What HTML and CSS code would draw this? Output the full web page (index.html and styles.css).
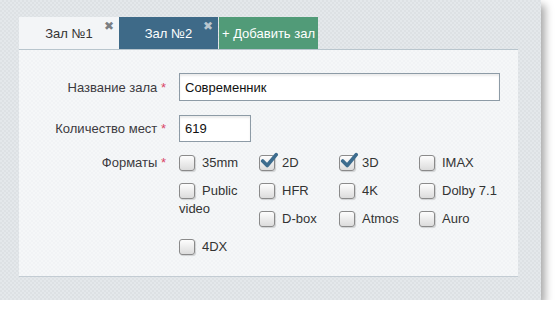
FILE: index.html
```html
<!DOCTYPE html>
<html lang="ru">
<head>
    <meta charset="UTF-8">
    <title>Залы</title>
    <link rel="stylesheet" href="styles.css">
</head>
<body>
    <div class="frame">
        <div class="tabs">
            <div class="tab tab-light">Зал №1<span class="tab-close">✖</span></div>
            <div class="tab tab-dark">Зал №2<span class="tab-close">✖</span></div>
            <div class="tab tab-add">+ Добавить зал</div>
        </div>

        <div class="panel">
            <div class="form-row">
                <label class="form-label">Название зала <span class="req">*</span></label>
                <input class="text-input wide" type="text" value="Современник">
            </div>
            <div class="form-row">
                <label class="form-label">Количество мест <span class="req">*</span></label>
                <input class="text-input short" type="text" value="619">
            </div>
            <div class="form-row top">
                <label class="form-label formats">Форматы <span class="req">*</span></label>
                <div class="formats-grid">
                    <div class="fmt"><span class="box"></span>35mm</div>
                    <div class="fmt"><span class="box checked"><svg viewBox="0 0 20 20"><path d="M3 10 L8 15 L18 3" /></svg></span>2D</div>
                    <div class="fmt"><span class="box checked"><svg viewBox="0 0 20 20"><path d="M3 10 L8 15 L18 3" /></svg></span>3D</div>
                    <div class="fmt"><span class="box"></span>IMAX</div>
                    <div class="fmt tall"><span class="box"></span>Public video</div>
                    <div class="fmt"><span class="box"></span>HFR</div>
                    <div class="fmt"><span class="box"></span>4K</div>
                    <div class="fmt"><span class="box"></span>Dolby 7.1</div>
                    <div class="fmt"><span class="box"></span>D-box</div>
                    <div class="fmt"><span class="box"></span>Atmos</div>
                    <div class="fmt"><span class="box"></span>Auro</div>
                    <div class="fmt"><span class="box"></span>4DX</div>
                </div>
            </div>
        </div>
    </div>
</body>
</html>
```

FILE: styles.css
```css
body {
    margin: 0;
    background-color: #ffffff;
    font-family: 'Liberation Sans', Arial, sans-serif;
    font-size: 13px;
    color: #333333;
}

.frame {
    width: 522px;
    height: 283px;
    padding: 17px 0 0 19px;
    background-color: #e1e5e8;
    background-image: repeating-conic-gradient(#dde1e4 0 25%, #e4e8eb 0 50%);
    background-size: 4px 4px;
    box-shadow: 4px 5px 8px rgba(0, 0, 0, 0.35);
}

.tabs {
    display: flex;
    height: 32px;
}

.tab {
    position: relative;
    width: 100px;
    display: flex;
    align-items: center;
    justify-content: center;
    box-sizing: border-box;
}

.tab-light {
    background-color: #f3f5f7;
    color: #333;
}

.tab-dark {
    width: 99px;
    background-color: #3e6a88;
    color: #ffffff;
}

.tab-add {
    margin-left: 1px;
    width: 99px;
    background-color: #519b78;
    color: #ffffff;
}

.tab-close {
    position: absolute;
    top: 2px;
    right: 5px;
    font-size: 12px;
    font-family: 'DejaVu Sans', sans-serif;
    color: #7b7f83;
}

.tab-dark .tab-close {
    color: #b9c6cf;
}

.panel {
    width: 499px;
    height: 203px;
    padding-top: 23px;
    background-color: #f3f5f7;
    background-image: repeating-conic-gradient(#f1f3f5 0 25%, #f5f7f8 0 50%);
    background-size: 4px 4px;
    border-top: 1px solid #b8c5cd;
    border-bottom: 1px solid #c3ccd3;
}

.form-row {
    display: flex;
    align-items: center;
    margin-bottom: 14px;
}

.form-row.top {
    align-items: flex-start;
    margin-top: -8px;
}

.form-label {
    width: 147px;
    margin-right: 13px;
    text-align: right;
    color: #3c3a40;
}

.form-label.formats {
    line-height: 30px;
}

.req {
    color: #d94668;
}

.text-input {
    box-sizing: border-box;
    height: 28px;
    padding: 0 5px;
    border: 1px solid #8d9ba6;
    box-shadow: inset 0 2px 2px rgba(0, 0, 0, 0.08);
    background-color: #ffffff;
    font-family: 'Liberation Sans', Arial, sans-serif;
    font-size: 13px;
    color: #111;
    outline: none;
}

.wide {
    width: 321px;
}

.short {
    width: 72px;
    height: 27px;
}

.formats-grid {
    display: grid;
    grid-template-columns: repeat(4, 80px);
    grid-auto-rows: 28px;
}

.fmt {
    line-height: 18px;
    padding-top: 6px;
    color: #333;
}

.fmt.tall {
    grid-row: span 2;
}

.box {
    position: relative;
    display: inline-block;
    vertical-align: -4px;
    width: 14px;
    height: 14px;
    margin-right: 7px;
    border: 1px solid #8a8a8a;
    border-radius: 3px;
    background: linear-gradient(#fdfdfd, #dcdcdc);
    box-shadow: 1px 1px 1px rgba(0, 0, 0, 0.15);
}

.box svg {
    position: absolute;
    left: 0;
    top: -4px;
    width: 18px;
    height: 18px;
}

.box svg path {
    fill: none;
    stroke: #3c6c8e;
    stroke-width: 4;
    stroke-linecap: round;
    stroke-linejoin: round;
}
```
